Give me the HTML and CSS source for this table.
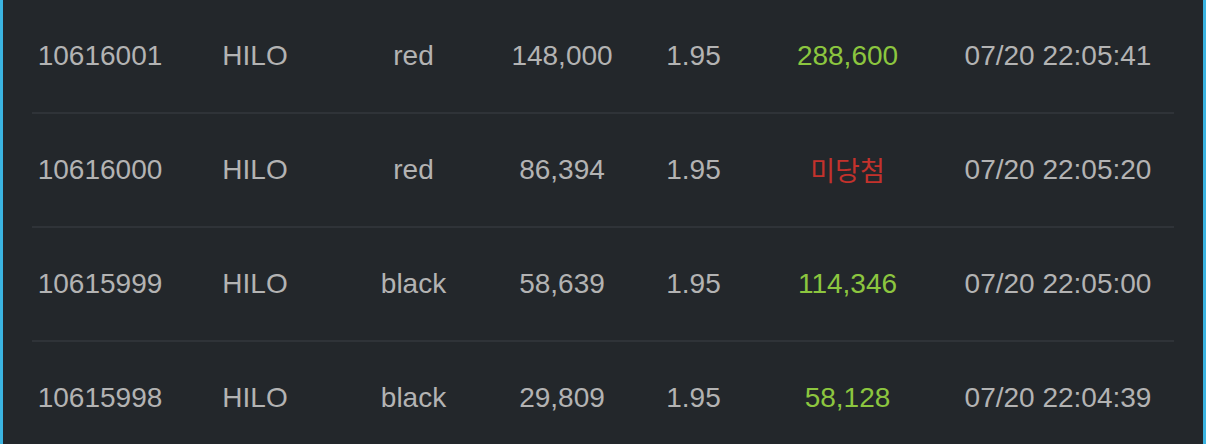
FILE: index.html
```html
<!DOCTYPE html>
<html lang="ko">
<head>
<meta charset="UTF-8">
<meta name="viewport" content="width=device-width, initial-scale=1.0">
<title>Bet History</title>
<link rel="stylesheet" href="styles.css">
</head>
<body>

<div class="panel">
    <div class="history">
        <div class="row">
            <span>10616001</span>
            <span>HILO</span>
            <span>red</span>
            <span>148,000</span>
            <span>1.95</span>
            <span class="win">288,600</span>
            <span>07/20 22:05:41</span>
        </div>
        <div class="row">
            <span>10616000</span>
            <span>HILO</span>
            <span>red</span>
            <span>86,394</span>
            <span>1.95</span>
            <span class="lose">미당첨</span>
            <span>07/20 22:05:20</span>
        </div>
        <div class="row">
            <span>10615999</span>
            <span>HILO</span>
            <span>black</span>
            <span>58,639</span>
            <span>1.95</span>
            <span class="win">114,346</span>
            <span>07/20 22:05:00</span>
        </div>
        <div class="row">
            <span>10615998</span>
            <span>HILO</span>
            <span>black</span>
            <span>29,809</span>
            <span>1.95</span>
            <span class="win">58,128</span>
            <span>07/20 22:04:39</span>
        </div>
    </div>
</div>

</body>
</html>
```

FILE: styles.css
```css
html, body {
    margin: 0;
    height: 100%;
    background-color: #23272b;
}
body {
    font-family: "Liberation Sans", Arial, "Noto Sans CJK KR", sans-serif;
    color: #b3b3b3;
    overflow: hidden;
}
.panel {
    min-height: 100%;
    box-sizing: border-box;
    border-left: 3px solid #3bb4e1;
    border-right: 3px solid #3bb4e1;
    padding: 0 29px 0 29px;
}
.row {
    display: grid;
    grid-template-columns: 136px 174px 143px 154px 109px 199px 222px;
    align-items: center;
    height: 111px;
    padding-bottom: 1px;
    border-bottom: 2px solid #2f3338;
    font-size: 28px;
    text-align: center;
}
.win {
    color: #8cc63f;
}
.lose {
    color: #c3322c;
    font-family: "Noto Sans CJK KR", sans-serif;
    font-size: 27px;
}
```
